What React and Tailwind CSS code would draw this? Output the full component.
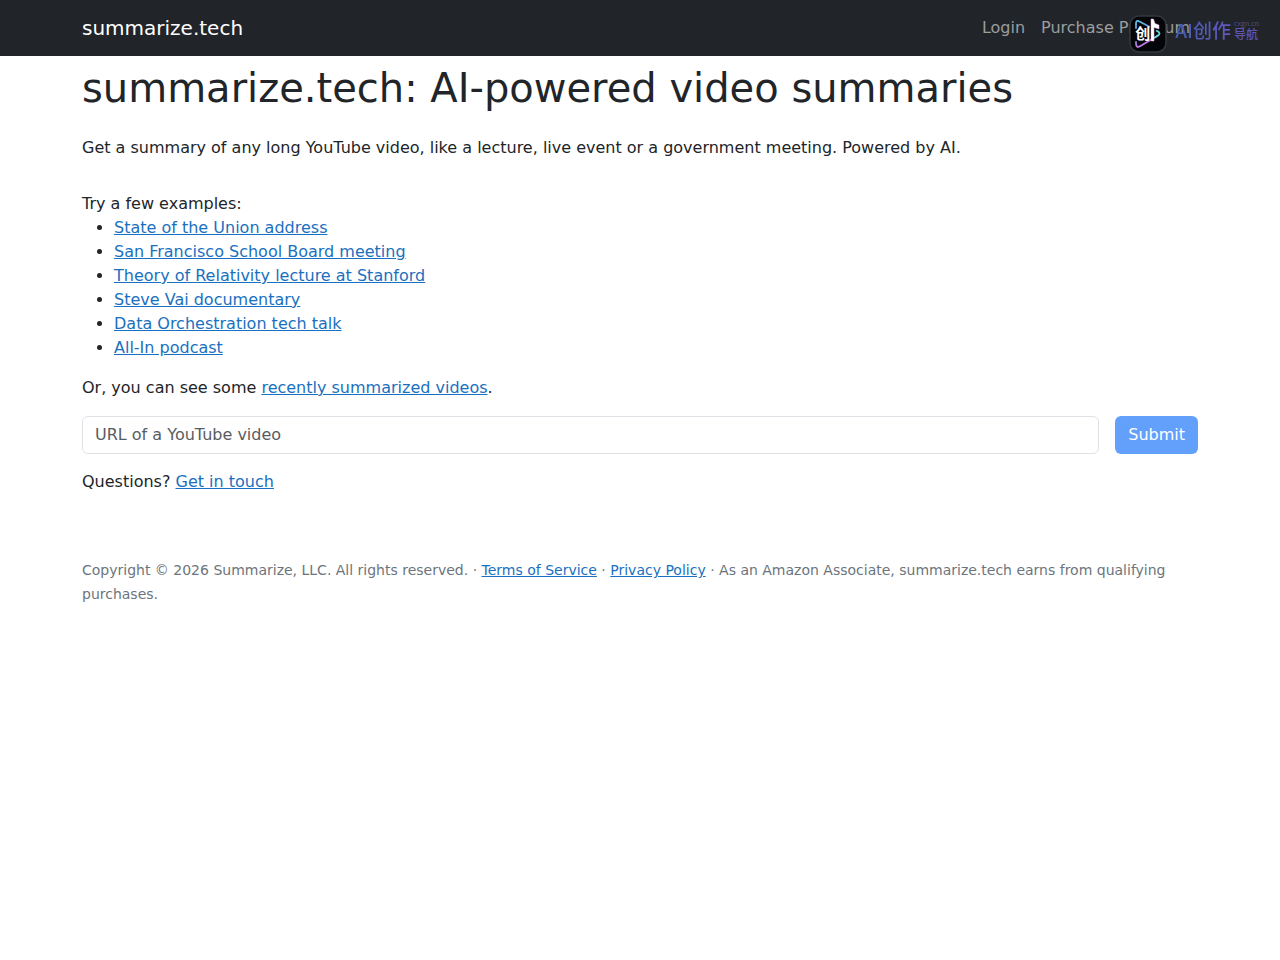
const examples = [
  "State of the Union address",
  "San Francisco School Board meeting",
  "Theory of Relativity lecture at Stanford",
  "Steve Vai documentary",
  "Data Orchestration tech talk",
  "All-In podcast",
];

const Link = ({ children }) => (
  <a href="#" className="text-[#1a70c0] underline">{children}</a>
);

const Badge = () => (
  <div className="absolute right-[21px] top-[15px] flex items-center gap-2 font-['Noto_Sans_CJK_SC',sans-serif]">
    <div className="relative h-[38px] w-[38px]">
      <svg viewBox="0 0 38 38" className="h-full w-full" aria-hidden="true">
        <defs>
          <linearGradient id="play" x1="0" y1="0" x2="0.3" y2="1">
            <stop offset="0" stopColor="#58c6e8" />
            <stop offset="0.5" stopColor="#7d7bd8" />
            <stop offset="1" stopColor="#c97be6" />
          </linearGradient>
        </defs>
        <rect x="1" y="1" width="36" height="36" rx="9" fill="#050609" stroke="#34383e" strokeWidth="1.5" />
        <path d="M7 13V8.500Q7 4.500 10.500 6.500L20 11.500M7 27V28.500Q7 33.500 11.500 31L29 20.500" fill="none" stroke="url(#play)" strokeWidth="1.8" strokeLinecap="round" />
        <path d="M27 15.500L29 16.500Q32 18.500 29 20.500L25 23" fill="none" stroke="#62d8dc" strokeWidth="1.8" />
        <path d="M22 4H24.500L26 8.500L30 10V14L25 12.500V26H22Z" fill="#fff" stroke="#eba6df" strokeWidth="0.5" />
      </svg>
      <span className="absolute left-[6px] top-[9px] text-[15px] font-bold leading-[18px] text-white">创</span>
    </div>
    <div className="flex items-center gap-[3px] pb-1">
      <span className="bg-linear-to-r from-[#3f5cae] to-[#6558bd] bg-clip-text pb-1 text-[19px] font-medium leading-6 text-transparent">AI创作</span>
      <span className="flex flex-col pb-1">
        <span className="h-[7px] text-[7px] leading-[7px] text-[#4a4b93]">cxgn.cn</span>
        <span className="text-[12px] font-medium leading-[14px] text-[#6254b4]">导航</span>
      </span>
    </div>
  </div>
);

const App = () => {
  return (
    <div className="relative font-['DejaVu_Sans',sans-serif] text-base text-[#212529]">
      <nav className="bg-[#212529]">
        <div className="mx-auto flex h-14 max-w-[1140px] items-center justify-between px-3">
          <a href="#" className="text-xl text-white">summarize.tech</a>
          <div className="flex text-[#9b9d9f]">
            <a href="#" className="px-2">Login</a>
            <a href="#" className="px-2">Purchase Premium</a>
          </div>
        </div>
      </nav>
      <Badge />

      <main className="mx-auto max-w-[1140px] px-3 pt-2">
        <h1 className="text-[40px] leading-[48px]">summarize.tech: AI-powered video summaries</h1>
        <p className="mt-6">Get a summary of any long YouTube video, like a lecture, live event or a government meeting. Powered by AI.</p>

        <div className="mt-8">Try a few examples:</div>
        <ul className="list-disc pl-8">
          {examples.map((e) => (
            <li key={e}><Link>{e}</Link></li>
          ))}
        </ul>
        <p className="mt-4">Or, you can see some <Link>recently summarized videos</Link>.</p>

        <form className="mt-4 flex gap-4" onSubmit={(e) => e.preventDefault()}>
          <input
            type="url"
            aria-label="URL of a YouTube video"
            placeholder="URL of a YouTube video"
            className="h-[38px] min-w-0 flex-1 rounded-md border border-[#dee2e6] bg-white px-3 pb-[2px] placeholder:text-[#595c5f]"
          />
          <button type="submit" disabled className="h-[38px] rounded-md bg-[#62a0fb] px-[13px] text-white">Submit</button>
        </form>
        <p className="mt-4">Questions? <Link>Get in touch</Link></p>

        <footer className="mt-16 text-sm leading-6 text-[#6c757d]">
          Copyright © 2026 Summarize, LLC. All rights reserved. · <Link>Terms of Service</Link> · <Link>Privacy Policy</Link> · As an Amazon Associate, summarize.tech earns from qualifying purchases.
        </footer>
      </main>
    </div>
  );
};

export default App;
